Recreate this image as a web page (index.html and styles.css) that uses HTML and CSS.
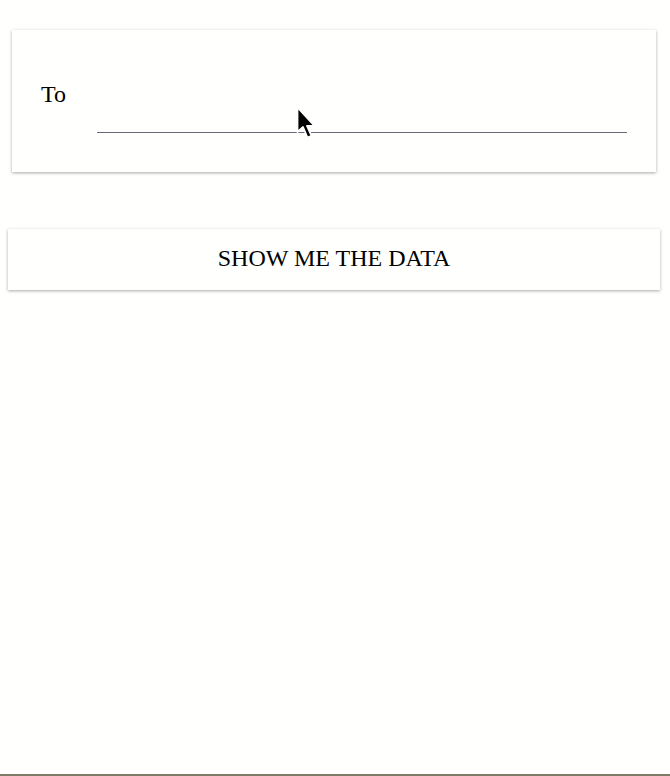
FILE: index.html
```html
<!DOCTYPE html>
<html>
<head>
<meta charset="utf-8">
<link rel="stylesheet" href="styles.css">
</head>
<body>
<div class="page">
  <div class="card">
    <label class="label">To</label>
    <div class="field"></div>
  </div>
  <button class="btn">SHOW ME THE DATA</button>
</div>
<svg class="cursor" width="22" height="36" viewBox="0 0 22 36">
  <path d="M1.5 1.5 L1.5 26 L7 21 L11.5 31.5 L15.5 29.8 L11 19.8 L18.5 19.8 Z" fill="#000" stroke="#fff" stroke-width="1.8" stroke-linejoin="round"/>
</svg>
</body>
</html>
```

FILE: styles.css
```css
html, body {
  margin: 0;
  padding: 0;
}
body {
  width: 670px;
  height: 776px;
  background: #fffffd;
  font-family: "Liberation Serif", "Times New Roman", serif;
  color: #000;
  position: relative;
  overflow: hidden;
  box-sizing: border-box;
  border-bottom: 2px solid #7d7d68;
}
.page {
  display: flex;
  flex-direction: column;
}
.card {
  margin: 30px 14px 0 12px;
  height: 142px;
  box-sizing: border-box;
  padding: 0 29px;
  display: flex;
  align-items: flex-start;
  background: #fffffe;
  box-shadow: 0 1px 3px rgba(0, 0, 0, 0.34);
}
.label {
  width: 56px;
  margin-top: 51px;
  font-size: 24px;
  line-height: 26px;
}
.field {
  flex: 1;
  height: 102px;
  border-bottom: 1px solid #68687a;
}
.btn {
  margin: 57px 10px 0 8px;
  height: 61px;
  box-sizing: border-box;
  padding: 16px 0 19px;
  border: none;
  background: #fffffe;
  box-shadow: 0 1px 3px rgba(0, 0, 0, 0.34);
  font-family: "Liberation Serif", "Times New Roman", serif;
  font-size: 24px;
  line-height: 26px;
  color: #000;
  text-align: center;
}
.cursor {
  position: absolute;
  left: 296px;
  top: 106px;
}
```
